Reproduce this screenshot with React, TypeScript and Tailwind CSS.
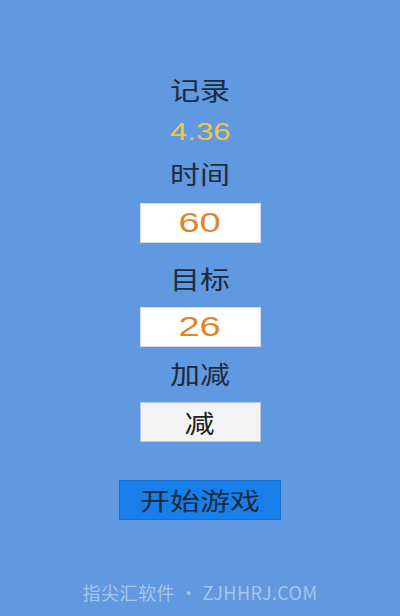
export default function App() {
  const cjk = { fontFamily: '"Noto Sans CJK SC", "Noto Sans", sans-serif' };
  const num = { fontFamily: '"Liberation Sans", Arial, sans-serif' };

  return (
    <div className="w-[400px] h-[616px] bg-[#6199e0] flex flex-col items-center relative overflow-hidden" style={cjk}>
      <div className="mt-[72px] h-[34px] leading-[34px] text-[25px] text-[#1d2b3e] scale-x-[1.2]">记录</div>
      <div className="mt-[11px] h-[30px] leading-[30px] text-[24px] text-[#ecc54f] scale-x-[1.3]" style={num}>4.36</div>
      <div className="mt-[9px] h-[34px] leading-[34px] text-[25px] text-[#1d2b3e] scale-x-[1.2]">时间</div>
      <div className="mt-[13px] w-[121px] h-[40px] bg-white border border-[#d3dcea] flex items-center justify-center">
        <span className="text-[28px] leading-none text-[#e0862a] scale-x-[1.36]" style={num}>60</span>
      </div>
      <div className="mt-[18px] h-[34px] leading-[34px] text-[25px] text-[#1d2b3e] scale-x-[1.2]">目标</div>
      <div className="mt-[12px] w-[121px] h-[40px] bg-white border border-[#d3dcea] flex items-center justify-center">
        <span className="text-[28px] leading-none text-[#e0862a] scale-x-[1.36]" style={num}>26</span>
      </div>
      <div className="mt-[9px] h-[34px] leading-[34px] text-[25px] text-[#1d2b3e] scale-x-[1.2]">加减</div>
      <div className="mt-[12px] w-[121px] h-[40px] bg-[#f3f3f3] border border-[#b9c6d8] flex items-center justify-center">
        <span className="text-[25px] leading-none text-[#222] scale-x-[1.2]">减</span>
      </div>
      <button className="mt-[38px] w-[162px] h-[40px] bg-[#187ee9] border border-[#1a6fcc] flex items-center justify-center">
        <span className="text-[24px] leading-none text-[#1d2b3e] scale-x-[1.25]">开始游戏</span>
      </button>
      <div className="absolute bottom-[10px] left-0 right-0 text-center text-[18px] text-white/45 tracking-[0.5px]">指尖汇软件 • ZJHHRJ.COM</div>
    </div>
  );
}
